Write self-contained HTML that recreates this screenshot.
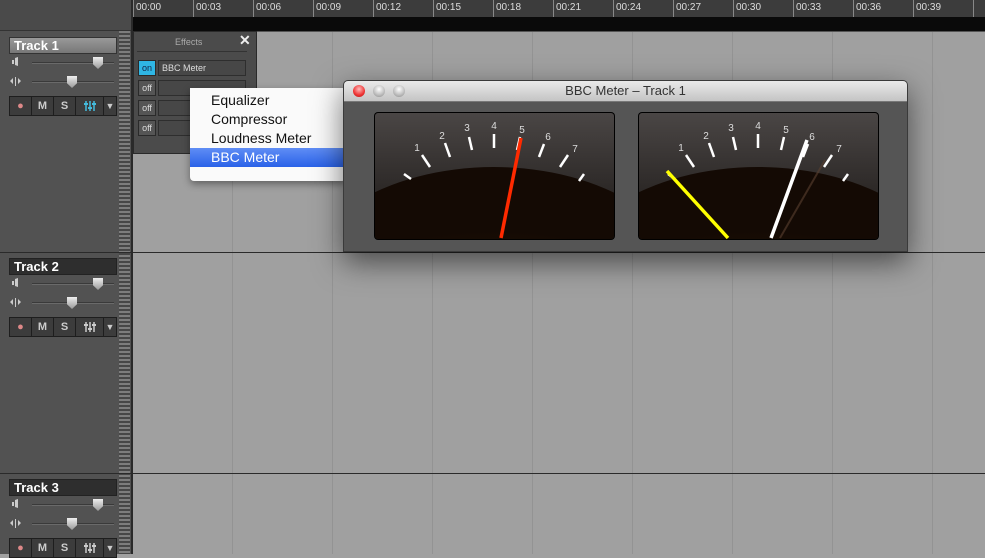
<!DOCTYPE html><html><head><style>
*{margin:0;padding:0;box-sizing:border-box}
body{width:985px;height:554px;overflow:hidden;position:relative;background:#a0a0a0;font-family:"Liberation Sans",sans-serif}
.a{position:absolute}
.lbl{position:absolute;left:9px;width:108px;height:17px;border:1px solid #222;color:#fff;font-weight:bold;font-size:13px;padding-left:4px;line-height:15px}
.btns{position:absolute;left:9px;width:108px;height:20px;border:1px solid #1e1e1e;background:#3c3c3c;display:flex}
.btns div{border-right:1px solid #1e1e1e;color:#ccc;font-size:11px;text-align:center;line-height:18px;font-weight:bold}
.trk{position:absolute;left:32px;width:82px;height:2px;background:#3a3a3a;border-bottom:1px solid #6a6a6a}
.knob{position:absolute;width:10px;height:12px;background:linear-gradient(#eee,#999);clip-path:polygon(0 0,100% 0,100% 60%,50% 100%,0 60%)}
.off{position:absolute;left:138px;width:18px;height:16px;background:#555;border:1px solid #2a2a2a;color:#ddd;font-size:9px;text-align:center;line-height:14px}
.slot{position:absolute;left:158px;width:88px;height:16px;background:#474747;border:1px solid #2e2e2e}
.mi{position:absolute;left:190px;width:155px;height:19px;font-size:14px;padding-left:21px;line-height:19px;color:#111}
.mix{display:block;margin:4px auto 0}
</style></head><body>
<div class="a" style="left:0;top:0;width:132px;height:554px;background:#525252"></div>
<div class="a" style="left:0;top:0;width:132px;height:31px;background:#4a4a4a;border-bottom:1px solid #333"></div>
<div class="a" style="left:119px;top:31px;width:11px;height:523px;background:repeating-linear-gradient(#888 0 2px,#444 2px 4px);opacity:.8"></div>
<div class="a" style="left:131px;top:0;width:2px;height:554px;background:#2a2a2a"></div>
<div class="a" style="left:133px;top:0;width:852px;height:17px;background:#3c3c3c"></div>
<div class="a" style="left:133px;top:17px;width:852px;height:14px;background:#0a0a0a"></div>
<div class="a" style="left:133px;top:31px;width:852px;height:1px;background:#555"></div>
<div class="a" style="left:133px;top:0;width:852px;height:17px;background:repeating-linear-gradient(90deg,#888 0 1px,transparent 1px 60px)"></div>
<div class="a" style="left:136px;top:2px;color:#ddd;font-size:10px;white-space:nowrap">
<span style="display:inline-block;width:60px">00:00</span><span style="display:inline-block;width:60px">00:03</span><span style="display:inline-block;width:60px">00:06</span><span style="display:inline-block;width:60px">00:09</span><span style="display:inline-block;width:60px">00:12</span><span style="display:inline-block;width:60px">00:15</span><span style="display:inline-block;width:60px">00:18</span><span style="display:inline-block;width:60px">00:21</span><span style="display:inline-block;width:60px">00:24</span><span style="display:inline-block;width:60px">00:27</span><span style="display:inline-block;width:60px">00:30</span><span style="display:inline-block;width:60px">00:33</span><span style="display:inline-block;width:60px">00:36</span><span style="display:inline-block;width:60px">00:39</span></div>
<div class="a" style="left:133px;top:32px;width:852px;height:522px;background:repeating-linear-gradient(90deg,transparent 0 99px,#939393 99px 100px)"></div>
<div class="a" style="left:0;top:252px;width:985px;height:1px;background:#2a2a2a"></div>
<div class="a" style="left:0;top:473px;width:985px;height:1px;background:#2a2a2a"></div>

<div class="lbl" style="top:37px;background:linear-gradient(#999,#777);border-color:#333">Track 1</div>
<div class="lbl" style="top:258px;background:#2e2e2e">Track 2</div>
<div class="lbl" style="top:479px;background:#2e2e2e">Track 3</div>

<div class="trk" style="top:62px"></div><div class="knob" style="left:93px;top:57px"></div>
<div class="trk" style="top:81px"></div><div class="knob" style="left:67px;top:76px"></div>
<div class="trk" style="top:283px"></div><div class="knob" style="left:93px;top:278px"></div>
<div class="trk" style="top:302px"></div><div class="knob" style="left:67px;top:297px"></div>
<div class="trk" style="top:504px"></div><div class="knob" style="left:93px;top:499px"></div>
<div class="trk" style="top:523px"></div><div class="knob" style="left:67px;top:518px"></div>
<svg class="a" style="left:0;top:0" width="30" height="554" fill="#ccc">
<g id="ic"><path d="M12 60h2v4h-2zM15 58l3-1v9l-3-1z"/><path d="M10 81l3-3v6zM15 77h1v9h-1zM18 78l3 3-3 3z"/></g>
<use href="#ic" y="221"/><use href="#ic" y="442"/>
</svg>

<div class="btns" style="top:96px"><div style="width:22px;color:#d88">●</div><div style="width:22px">M</div><div style="width:22px">S</div><div style="width:28px"><svg class="mix" width="12" height="10" stroke="#4bd" stroke-width="1.5"><path d="M2 0v10M6 0v10M10 0v10"/><path d="M0 3h4M4 7h4M8 3h4" stroke-width="2"/></svg></div><div style="width:12px;border:0;font-size:9px">▼</div></div>
<div class="btns" style="top:317px"><div style="width:22px;color:#d88">●</div><div style="width:22px">M</div><div style="width:22px">S</div><div style="width:28px"><svg class="mix" width="12" height="10" stroke="#ccc" stroke-width="1.5"><path d="M2 0v10M6 0v10M10 0v10"/><path d="M0 3h4M4 7h4M8 3h4" stroke-width="2"/></svg></div><div style="width:12px;border:0;font-size:9px">▼</div></div>
<div class="btns" style="top:538px"><div style="width:22px;color:#d88">●</div><div style="width:22px">M</div><div style="width:22px">S</div><div style="width:28px"><svg class="mix" width="12" height="10" stroke="#ccc" stroke-width="1.5"><path d="M2 0v10M6 0v10M10 0v10"/><path d="M0 3h4M4 7h4M8 3h4" stroke-width="2"/></svg></div><div style="width:12px;border:0;font-size:9px">▼</div></div>

<div class="a" style="left:133px;top:31px;width:124px;height:123px;background:#4b4b4b;border:1px solid #2a2a2a"></div>
<div class="a" style="left:175px;top:37px;color:#aaa;font-size:9px">Effects</div>
<div class="a" style="left:239px;top:32px;color:#eee;font-size:14px;font-weight:bold">✕</div>
<div class="a" style="left:137px;top:51px;width:110px;height:1px;background:#333"></div>
<div class="off" style="top:60px;background:#2fb6e4;color:#124">on</div>
<div class="slot" style="top:60px;color:#ddd;font-size:9px;padding-left:3px;line-height:14px">BBC Meter</div>
<div class="off" style="top:80px">off</div><div class="slot" style="top:80px"></div>
<div class="off" style="top:100px">off</div><div class="slot" style="top:100px"></div>
<div class="off" style="top:120px">off</div><div class="slot" style="top:120px"></div>

<div class="a" style="left:190px;top:88px;width:156px;height:93px;background:#fafafa;box-shadow:0 3px 8px rgba(0,0,0,.4);border-radius:0 0 4px 4px"></div>
<div class="mi" style="top:91px">Equalizer</div>
<div class="mi" style="top:110px">Compressor</div>
<div class="mi" style="top:129px">Loudness Meter</div>
<div class="mi" style="top:148px;background:linear-gradient(#5f8df5,#2a62e8);color:#fff">BBC Meter</div>

<div class="a" style="left:343px;top:80px;width:565px;height:172px;background:#555;border:1px solid #3a3a3a;border-radius:5px 5px 0 0;box-shadow:0 10px 30px rgba(0,0,0,.55)"></div>
<div class="a" style="left:344px;top:81px;width:563px;height:21px;background:linear-gradient(#eaeaea,#c4c4c4);border-radius:4px 4px 0 0;border-bottom:1px solid #777"></div>
<div class="a" style="left:353px;top:85px;width:12px;height:12px;border-radius:50%;background:radial-gradient(circle at 50% 35%,#fbb,#e33 60%,#a11)"></div>
<div class="a" style="left:373px;top:85px;width:12px;height:12px;border-radius:50%;background:radial-gradient(circle at 50% 35%,#fff,#bbb 60%,#888)"></div>
<div class="a" style="left:393px;top:85px;width:12px;height:12px;border-radius:50%;background:radial-gradient(circle at 50% 35%,#fff,#bbb 60%,#888)"></div>
<div class="a" style="left:344px;top:83px;width:563px;text-align:center;font-size:13px;color:#333">BBC Meter – Track 1</div>

<svg class="a" style="left:0;top:0" width="985" height="554">
<defs>
<radialGradient id="g" cx="50%" cy="100%" r="75%"><stop offset="0" stop-color="#5a330a"/><stop offset="1" stop-color="#140a04"/></radialGradient>
<linearGradient id="t" x1="0" y1="0" x2="0" y2="1"><stop offset="0" stop-color="#4a4645"/><stop offset="1" stop-color="#1a1614"/></linearGradient>
<clipPath id="c1"><rect x="375" y="113" width="239" height="126" rx="3"/></clipPath>
</defs>
<g id="m">
<rect x="374" y="112" width="241" height="128" rx="4" fill="#000"/>
<g clip-path="url(#c1)">
<rect x="375" y="113" width="239" height="126" fill="url(#t)"/>
<ellipse cx="494" cy="295" rx="200" ry="128" fill="url(#g)"/>
</g>
<g stroke="#fff" stroke-width="2.5">
<line x1="404" y1="174" x2="411" y2="179"/><line x1="422" y1="155" x2="430" y2="167"/>
<line x1="445" y1="143" x2="450" y2="157"/><line x1="469" y1="137" x2="472" y2="150"/>
<line x1="494" y1="134" x2="494" y2="148"/><line x1="520" y1="137" x2="517" y2="150"/>
<line x1="544" y1="144" x2="539" y2="157"/><line x1="568" y1="155" x2="560" y2="167"/>
<line x1="584" y1="174" x2="579" y2="181"/></g>
<g fill="#ddd" font-size="10" font-family="Liberation Sans" text-anchor="middle">
<text x="417" y="151">1</text><text x="442" y="139">2</text><text x="467" y="131">3</text><text x="494" y="129">4</text><text x="522" y="133">5</text><text x="548" y="140">6</text><text x="575" y="152">7</text></g>
</g>
<use href="#m" x="264"/>
<line x1="501" y1="238" x2="521" y2="138" stroke="#ff2a00" stroke-width="3.5"/>
<line x1="780" y1="238" x2="825" y2="160" stroke="#5a4030" stroke-width="2" opacity=".6"/>
<line x1="667" y1="171" x2="728" y2="238" stroke="#ff0" stroke-width="3.5"/>
<line x1="771" y1="238" x2="807" y2="140" stroke="#fff" stroke-width="3.5"/>
</svg>
</body></html>
